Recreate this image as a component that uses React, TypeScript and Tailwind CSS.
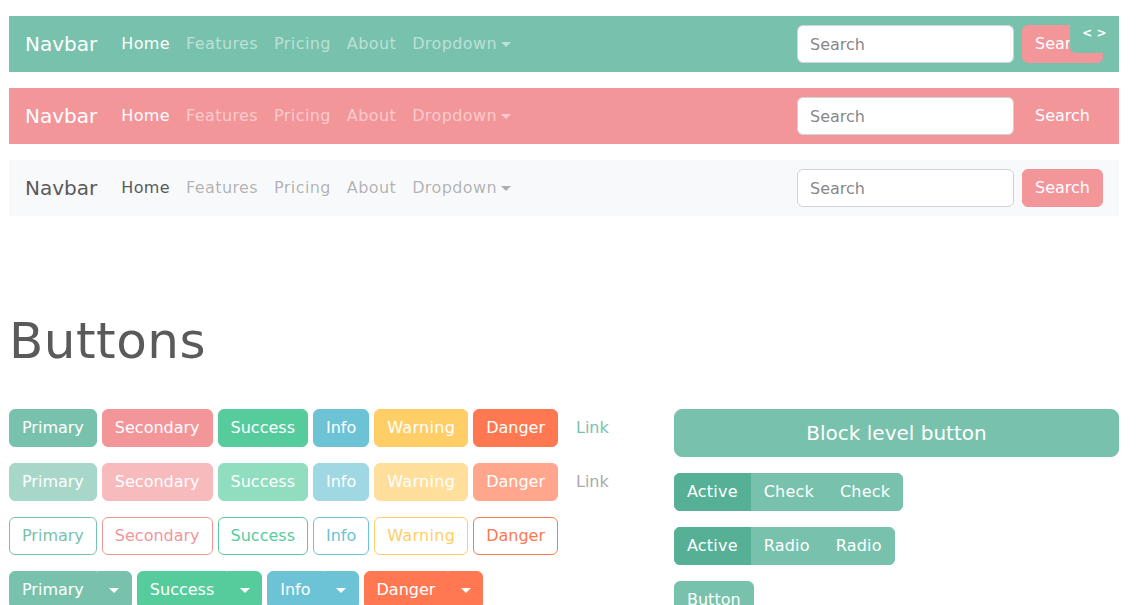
import React from "react";

const Caret = () => (
  <span className="ml-[4px] inline-block h-0 w-0 border-t-[5px] border-r-[5px] border-l-[5px] border-r-transparent border-l-transparent border-t-current align-middle" />
);

type NavProps = {
  bg: string;
  brand: string;
  active: string;
  link: string;
  searchBtn: string;
};

const Navbar = ({ bg, brand, active, link, searchBtn }: NavProps) => (
  <nav className={`flex h-[56px] items-center px-[16px] ${bg}`}>
    <a className={`mr-[16px] text-[20px] leading-[30px] ${brand}`}>Navbar</a>
    <ul className="flex items-center tracking-[0.4px]">
      <li className={`px-[8px] leading-6 ${active}`}>Home</li>
      <li className={`px-[8px] leading-6 ${link}`}>Features</li>
      <li className={`px-[8px] leading-6 ${link}`}>Pricing</li>
      <li className={`px-[8px] leading-6 ${link}`}>About</li>
      <li className={`flex items-center px-[8px] leading-6 ${link}`}>
        Dropdown
        <Caret />
      </li>
    </ul>
    <div className="ml-auto flex items-center">
      <input
        placeholder="Search"
        className="h-[38px] w-[217px] rounded-[6px] border border-[#ced4da] bg-white px-[12px] text-[16px] text-[#888] outline-none placeholder:text-[#888]"
      />
      <button className={`ml-[8px] h-[38px] rounded-[6px] border px-[12px] text-[16px] leading-6 text-white ${searchBtn}`}>
        Search
      </button>
    </div>
  </nav>
);

const solid = [
  { label: "Primary", cls: "bg-[#78c2ad] border-[#78c2ad]" },
  { label: "Secondary", cls: "bg-[#f3969a] border-[#f3969a]" },
  { label: "Success", cls: "bg-[#56cc9d] border-[#56cc9d]" },
  { label: "Info", cls: "bg-[#6cc3d5] border-[#6cc3d5]" },
  { label: "Warning", cls: "bg-[#ffce67] border-[#ffce67] tracking-[0.3px]" },
  { label: "Danger", cls: "bg-[#ff7851] border-[#ff7851]" },
];

const outline = [
  { label: "Primary", cls: "border-[#78c2ad] text-[#78c2ad]" },
  { label: "Secondary", cls: "border-[#f3969a] text-[#f3969a]" },
  { label: "Success", cls: "border-[#56cc9d] text-[#56cc9d]" },
  { label: "Info", cls: "border-[#6cc3d5] text-[#6cc3d5]" },
  { label: "Warning", cls: "border-[#ffce67] text-[#ffce67] tracking-[0.3px]" },
  { label: "Danger", cls: "border-[#ff7851] text-[#ff7851]" },
];

const split = [
  { label: "Primary", cls: "bg-[#78c2ad] border-[#78c2ad]" },
  { label: "Success", cls: "bg-[#56cc9d] border-[#56cc9d]" },
  { label: "Info", cls: "bg-[#6cc3d5] border-[#6cc3d5]" },
  { label: "Danger", cls: "bg-[#ff7851] border-[#ff7851]" },
];

const btn = "flex h-[38px] items-center justify-center border px-[12px] text-[16px] leading-6";

export default function App() {
  return (
    <div
      className="relative min-h-screen bg-white pt-[16px] pl-[9px] text-[16px]"
      style={{ fontFamily: '"DejaVu Sans", sans-serif' }}
    >
      <div className="flex w-[1110px] flex-col gap-[16px]">
        <Navbar
          bg="bg-[#78c2ad]"
          brand="text-white"
          active="text-white"
          link="text-white/50"
          searchBtn="bg-[#f3969a] border-[#f3969a]"
        />
        <Navbar
          bg="bg-[#f3969a]"
          brand="text-white"
          active="text-white"
          link="text-white/50"
          searchBtn="bg-[#f3969a] border-[#f3969a]"
        />
        <Navbar
          bg="bg-[#f8f9fa]"
          brand="text-[#5a5a5a]"
          active="text-[#5a5a5a]"
          link="text-black/30"
          searchBtn="bg-[#f3969a] border-[#f3969a]"
        />
      </div>

      <h1 className="mt-[95px] text-[50px] leading-[1.2] tracking-[0.5px] text-[#5a5a5a]">Buttons</h1>

      <div className="mt-[38px] flex w-[1110px]">
        <div className="flex w-[665px] flex-col gap-[16px]">
          <div className="flex gap-[5px]">
            {solid.map((b) => (
              <button key={b.label} className={`${btn} rounded-[6px] text-white ${b.cls}`}>
                {b.label}
              </button>
            ))}
            <button className={`${btn} border-transparent text-[#78c2ad]`}>Link</button>
          </div>
          <div className="flex gap-[5px]">
            {solid.map((b) => (
              <button key={b.label} className={`${btn} rounded-[6px] text-white opacity-65 ${b.cls}`}>
                {b.label}
              </button>
            ))}
            <button className={`${btn} border-transparent text-[#aaa]`}>Link</button>
          </div>
          <div className="flex gap-[5px]">
            {outline.map((b) => (
              <button key={b.label} className={`${btn} rounded-[6px] bg-white ${b.cls}`}>
                {b.label}
              </button>
            ))}
          </div>
          <div className="flex gap-[5px]">
            {split.map((b) => (
              <div key={b.label} className="flex">
                <button className={`${btn} rounded-l-[6px] text-white ${b.cls}`}>{b.label}</button>
                <button className={`${btn} w-[35px] rounded-r-[6px] px-0 text-white ${b.cls}`}>
                  <span className="inline-block h-0 w-0 border-t-[5px] border-r-[5px] border-l-[5px] border-r-transparent border-l-transparent border-t-current" />
                </button>
              </div>
            ))}
          </div>
        </div>

        <div className="flex w-[445px] flex-col items-start gap-[16px]">
          <button className="h-[48px] w-full rounded-[8px] border border-[#78c2ad] bg-[#78c2ad] text-[20px] text-white">
            Block level button
          </button>
          <div className="flex overflow-hidden rounded-[6px] tracking-[0.2px]">
            <button className={`${btn} border-[#56b095] bg-[#56b095] text-white`}>Active</button>
            <button className={`${btn} border-[#78c2ad] bg-[#78c2ad] text-white`}>Check</button>
            <button className={`${btn} border-[#78c2ad] bg-[#78c2ad] text-white`}>Check</button>
          </div>
          <div className="flex overflow-hidden rounded-[6px] tracking-[0.2px]">
            <button className={`${btn} border-[#56b095] bg-[#56b095] text-white`}>Active</button>
            <button className={`${btn} border-[#78c2ad] bg-[#78c2ad] text-white`}>Radio</button>
            <button className={`${btn} border-[#78c2ad] bg-[#78c2ad] text-white`}>Radio</button>
          </div>
          <button className={`${btn} rounded-[6px] border-[#78c2ad] bg-[#78c2ad] text-white`}>Button</button>
        </div>
      </div>

      <div className="absolute top-[16px] left-[1070px] h-[37px] w-[49px] rounded-bl-[6px] bg-[#78c2ad] pt-[8px] text-center text-[12px] leading-[18px] font-bold text-white">
        &lt; &gt;
      </div>
    </div>
  );
}
